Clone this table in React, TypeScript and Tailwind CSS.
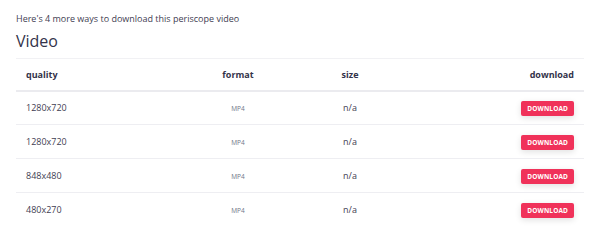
const rows = [
  { quality: "1280x720", format: "MP4", size: "n/a" },
  { quality: "1280x720", format: "MP4", size: "n/a" },
  { quality: "848x480", format: "MP4", size: "n/a" },
  { quality: "480x270", format: "MP4", size: "n/a" },
];

export default function App() {
  return (
    <div className="w-[600px] h-[240px] bg-white px-4 pt-[12px] font-['Open_Sans',sans-serif] text-[#3f4052]">
      <p className="text-[9px] leading-[14px]">Here's 4 more ways to download this periscope video</p>
      <h2 className="text-[16px] leading-[22px] mt-[4px] text-[#33334a]">Video</h2>
      <table className="w-full mt-[6px] border-collapse table-fixed">
        <colgroup>
          <col className="w-[160px]" />
          <col className="w-[124px]" />
          <col className="w-[100px]" />
          <col />
        </colgroup>
        <thead>
          <tr className="border-t border-[#f1f1f4] border-b-2 border-b-[#ebebef] text-[9px] font-bold text-[#33334a]">
            <th className="text-left px-[10px] h-[32px]">quality</th>
            <th className="text-center">format</th>
            <th className="text-center">size</th>
            <th className="text-right px-[10px]">download</th>
          </tr>
        </thead>
        <tbody>
          {rows.map((r, i) => (
            <tr key={i} className={`text-[9px] ${i < rows.length - 1 ? "border-b border-[#eeeef2]" : ""}`}>
              <td className="px-[10px] h-[34px]">{r.quality}</td>
              <td className="text-center">
                <span className="text-[6.5px] text-[#6f7688] uppercase">{r.format}</span>
              </td>
              <td className="text-center">{r.size}</td>
              <td className="text-right px-[10px] pt-[2px]">
                <button className="h-[15px] px-[6px] rounded-[2px] bg-[#f0325a] text-white text-[6.5px] font-bold tracking-[0.02em] shadow-[0_2px_6px_rgba(0,0,0,0.12)]">
                  DOWNLOAD
                </button>
              </td>
            </tr>
          ))}
        </tbody>
      </table>
    </div>
  );
}
